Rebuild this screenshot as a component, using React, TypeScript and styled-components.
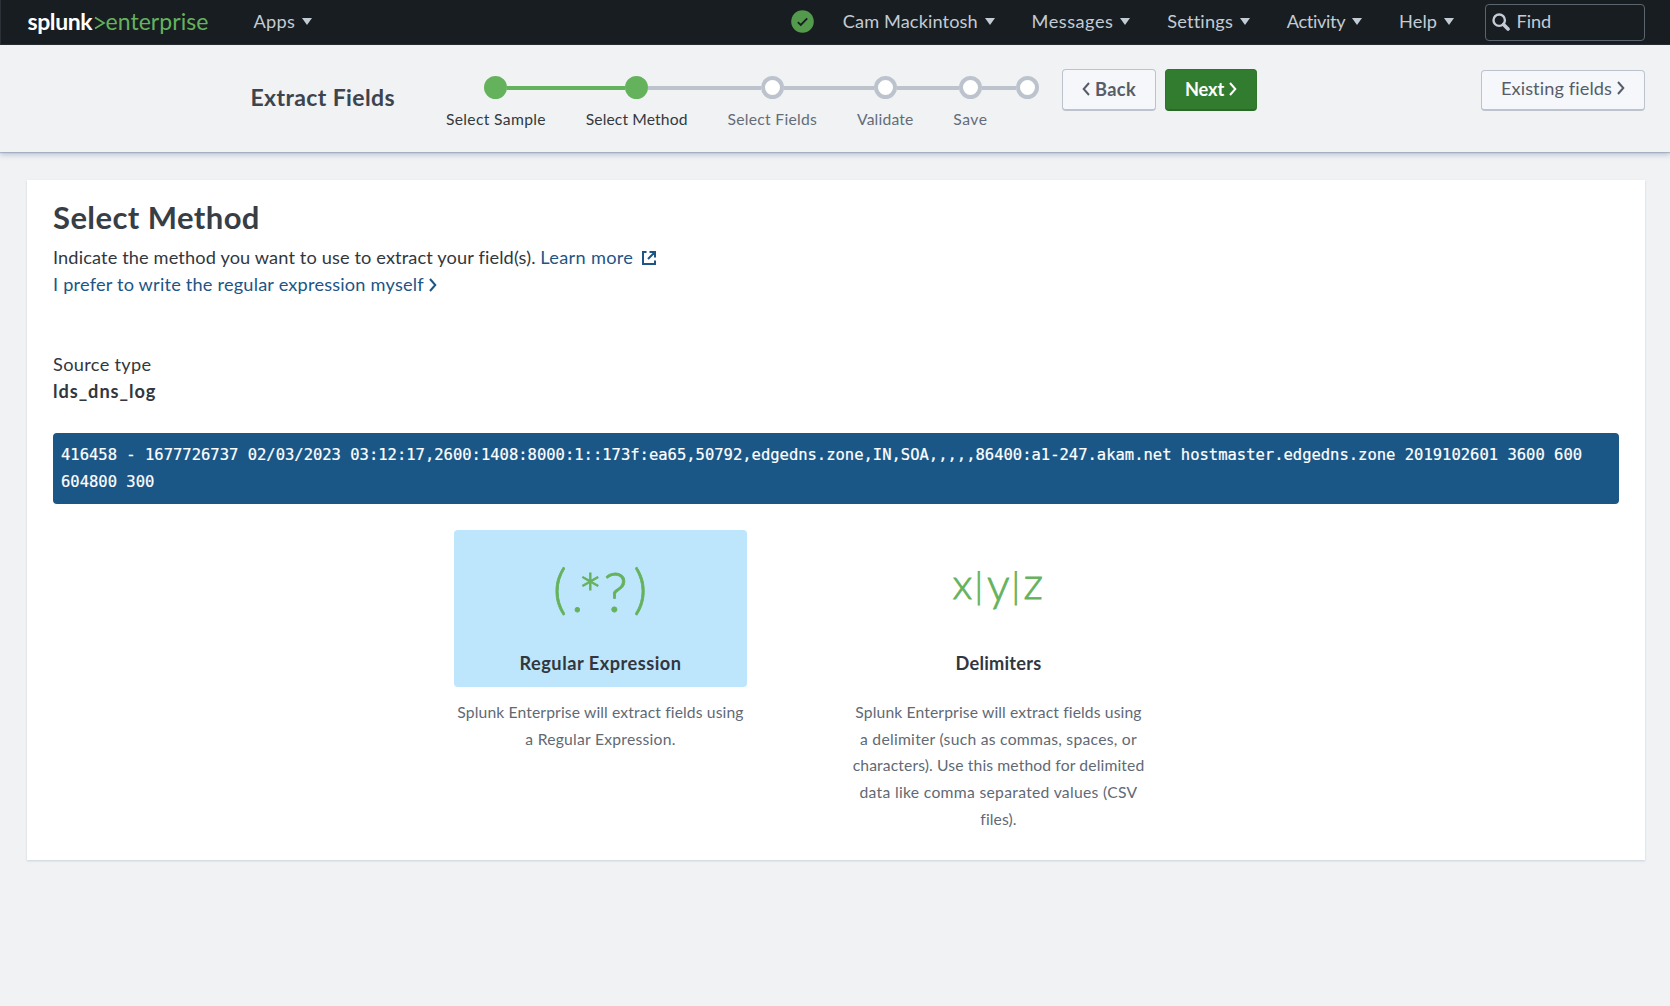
import React from 'react';
import styled, { createGlobalStyle, css } from 'styled-components';

const green = '#65b25d';
const grey = '#bcc3cd';
const ink = '#31373e';
const link = '#1d5586';

const GlobalStyle = createGlobalStyle`
  * { box-sizing: border-box; }
  body {
    margin: 0;
    background: #f0f2f4;
    color: ${ink};
    font-family: Lato, "Liberation Sans", sans-serif;
    font-size: 18.2px;
    line-height: 27px;
    font-variant-ligatures: none;
  }
`;

const Page = styled.div`
  height: 1006px;
  overflow: hidden;
`;

/* letter-spaced run of text */
const Label = styled.span<{ $track?: number }>`
  letter-spacing: ${(p) => p.$track ?? 0}px;
  white-space: nowrap;
`;

/* ---------- top bar ---------- */
const NavBar = styled.nav`
  display: flex;
  align-items: flex-start;
  height: 45px;
  padding: 0 25px 0 26.5px;
  background: #171d21;
  border-left: 1px solid #2b3136;
  border-bottom: 1px solid #24292c;
  color: #c3cbd4;
`;

const Logo = styled.a`
  display: flex;
  width: 226px;
  line-height: 42px;
  font-size: 23px;
  color: ${green};
`;

const LogoName = styled.span`
  width: 65px;
  font-weight: 700;
  letter-spacing: -0.4px;
  color: #fff;
`;

const LogoMark = styled.svg`
  width: 13px;
  height: 42px;
`;

const LogoEdition = styled.span`
  letter-spacing: 0.05px;
`;

const NavItem = styled.a`
  display: flex;
  align-items: center;
  gap: 7px;
  height: 43px;
`;

const MenuGroup = styled.div`
  display: flex;
  gap: 36.8px;
`;

const Caret = styled.span`
  width: 0;
  height: 0;
  border: 5px solid transparent;
  border-top: 7px solid currentColor;
  border-bottom: 0;
`;

const Status = styled.svg`
  width: 23px;
  height: 23px;
  margin: 10px 29px 0 auto;
`;

const FindBox = styled.div`
  display: flex;
  align-items: center;
  gap: 6.5px;
  width: 160px;
  height: 37px;
  margin: 4px 0 0 31px;
  padding: 0 0 2px 6px;
  border: 1px solid #5c656e;
  border-radius: 4px;
`;

/* ---------- wizard header ---------- */
const Header = styled.header`
  position: relative;
  display: flex;
  align-items: flex-start;
  height: 107px;
  padding: 0 25px 0 250.5px;
  background: #f0f2f4;
  box-shadow: 0 1px 1px rgba(120, 138, 165, 0.45), 0 3px 5px rgba(120, 138, 165, 0.4);
`;

const WizardTitle = styled.h2`
  width: 175.5px;
  margin: 39px 0 0;
  font-size: 23px;
  font-weight: 700;
  letter-spacing: 0.38px;
  color: #3c444d;
`;

const Steps = styled.ol`
  display: flex;
  width: 623px;
  margin: 31px 0 0;
  padding: 0;
  list-style: none;
`;

const Step = styled.li<{ $done: boolean }>`
  display: flex;
  flex: none;
  flex-direction: column;
  align-items: center;
  gap: 7px;
  font-size: 15.7px;
  color: ${(p) => (p.$done ? '#33393f' : '#646c78')};
`;

const Marker = styled.div`
  display: flex;
  align-items: center;
  align-self: stretch;
`;

const Rail = styled.span<{ $tone: string }>`
  flex: 1;
  height: 4px;
  background: ${(p) => p.$tone};
`;

const Dot = styled.span<{ $done: boolean }>`
  width: 23px;
  height: 23px;
  border: 4px solid ${(p) => (p.$done ? green : grey)};
  border-radius: 50%;
  background: ${(p) => (p.$done ? green : '#fff')};
`;

const StepName = styled.span<{ $track: number }>`
  min-height: 27px;
  padding: 0 19.9px;
  letter-spacing: ${(p) => p.$track}px;
  white-space: nowrap;
`;

const primary = css`
  border-color: #2f752c;
  border-bottom: 2px solid #2a6a28;
  background: #327c2f;
  color: #fff;
`;

const Button = styled.button<{ $width: number; $primary?: boolean; $bold?: boolean; $top?: number }>`
  display: flex;
  align-items: center;
  justify-content: center;
  gap: 5px;
  width: ${(p) => p.$width}px;
  height: ${(p) => 42 - (p.$top ?? 0)}px;
  margin-top: ${(p) => 24 + (p.$top ?? 0)}px;
  padding: 0 0 ${(p) => (p.$top ? 4 : 2)}px;
  border: 1px solid ${grey};
  border-bottom-width: 2px;
  border-radius: 4px;
  background: #f6f7fa;
  color: #565d69;
  font: ${(p) => (p.$bold ? 700 : 400)} 18.2px Lato, sans-serif;
  ${(p) => p.$primary && primary}
`;

const Actions = styled.div`
  display: flex;
  gap: 9px;
  margin-left: 13px;
`;

const Aside = styled.div`
  margin-left: auto;
`;

/* ---------- content ---------- */
const Card = styled.main`
  height: 680px;
  margin: 28px 25px 0 27px;
  padding: 21px 26px 0;
  background: #fff;
  box-shadow: 0 1px 2px rgba(60, 80, 100, 0.2);
`;

const Title = styled.h1`
  margin: 0 0 11px;
  font-size: 31px;
  font-weight: 700;
  line-height: 32px;
  letter-spacing: 0.42px;
  color: #373e46;
`;

const Line = styled.p<{ $bold?: boolean }>`
  display: flex;
  align-items: center;
  height: 27px;
  margin: 0;
  font-weight: ${(p) => (p.$bold ? 700 : 400)};
`;

const Link = styled.a<{ $gap: number }>`
  display: flex;
  align-items: center;
  gap: ${(p) => p.$gap}px;
  color: ${link};
`;

const Source = styled.section`
  margin: 53px 0 28px;
`;

const Event = styled.pre`
  height: 71px;
  margin: 0 0 26px;
  padding: 9px 8px;
  border-radius: 4px;
  background: #1a5787;
  color: #fff;
  font: 15.5px/27px "DejaVu Sans Mono", monospace;
  white-space: pre-wrap;
  -webkit-text-stroke: 0.2px #fff;
`;

const Methods = styled.div`
  display: flex;
  gap: 105px;
  margin-left: 401px;
`;

const Method = styled.section`
  width: 293px;
`;

const Tile = styled.div<{ $selected?: boolean }>`
  display: flex;
  flex-direction: column;
  align-items: center;
  justify-content: space-between;
  height: 157px;
  margin-bottom: 12px;
  padding: 27px 0 10px;
  border-radius: 4px;
  background: ${(p) => (p.$selected ? '#bde5fb' : 'transparent')};
  font-weight: 700;
  color: #31373e;
`;

const Glyph = styled.svg`
  width: 110px;
  height: 78px;
  overflow: visible;
  fill: ${green};
  stroke: ${green};
  stroke-width: 0.8;
  font-family: Lato, sans-serif;
  font-weight: 300;
`;

const Description = styled.p`
  margin: 0;
  font-size: 15.7px;
  line-height: 26.7px;
  text-align: center;
  white-space: nowrap;
  color: #616975;
`;

const Row = styled.span<{ $track: number }>`
  display: block;
  letter-spacing: ${(p) => p.$track}px;
`;

const Chevron = ({ left }: { left?: boolean }) => (
  <svg width="8" height="14" viewBox="0 0 8 14" fill="none" stroke="currentColor" strokeWidth="2">
    <path d={left ? 'M7 1 1.7 7 7 13' : 'M1 1 6.3 7 1 13'} />
  </svg>
);

const menus = [
  { name: 'Cam Mackintosh', track: 0.1 },
  { name: 'Messages', track: 0.5 },
  { name: 'Settings', track: 0.2 },
  { name: 'Activity', track: -0.35 },
  { name: 'Help', track: 0.05 },
];

const steps = [
  { name: 'Select Sample', track: 0.33, done: true },
  { name: 'Select Method', track: 0.11, done: true },
  { name: 'Select Fields', track: 0.29, done: false },
  { name: 'Validate', track: 0.18, done: false },
  { name: 'Save', track: 0.5, done: false },
  { name: '', track: 0, done: false },
];

const eventText =
  '416458 - 1677726737 02/03/2023 03:12:17,2600:1408:8000:1::173f:ea65,50792,edgedns.zone,IN,SOA,,,,,86400:a1-247.akam.net hostmaster.edgedns.zone 2019102601 3600 600 604800 300';

const railTone = (from: number) => {
  if (from < 0 || from >= steps.length - 1) return 'transparent';
  return steps[from + 1].done ? green : grey;
};

export default function App() {
  return (
    <Page>
      <GlobalStyle />
      <NavBar>
        <Logo>
          <LogoName>splunk</LogoName>
          <LogoMark viewBox="0 0 13 42" fill="none" stroke={green} strokeWidth="1.7">
            <path d="M2 17.5 11 23 2 28.5" />
          </LogoMark>
          <LogoEdition>enterprise</LogoEdition>
        </Logo>
        <NavItem>
          <Label $track={0.3}>Apps</Label>
          <Caret />
        </NavItem>
        <Status viewBox="0 0 23 23">
          <circle cx="11.5" cy="11.5" r="11.3" fill="#539a4c" />
          <path d="M6.8 12.2 9.8 15 16.2 8.4" fill="none" stroke="#171d21" strokeWidth="1.8" />
        </Status>
        <MenuGroup>
          {menus.map((m) => (
            <NavItem key={m.name}>
              <Label $track={m.track}>{m.name}</Label>
              <Caret />
            </NavItem>
          ))}
        </MenuGroup>
        <FindBox>
          <svg width="18" height="18" viewBox="0 0 18 18" fill="none" stroke="currentColor">
            <circle cx="7.2" cy="7.2" r="5.7" strokeWidth="2.4" />
            <path d="M11.5 11.5 16 16" strokeWidth="3.6" strokeLinecap="round" />
          </svg>
          <Label $track={-0.1}>Find</Label>
        </FindBox>
      </NavBar>

      <Header>
        <WizardTitle>Extract Fields</WizardTitle>
        <Steps>
          {steps.map((s, i) => (
            <Step key={i} $done={s.done}>
              <Marker>
                <Rail $tone={railTone(i - 1)} />
                <Dot $done={s.done} />
                <Rail $tone={railTone(i)} />
              </Marker>
              <StepName $track={s.track}>{s.name}</StepName>
            </Step>
          ))}
        </Steps>
        <Actions>
          <Button $width={94} $bold>
            <Chevron left />
            <Label $track={0.4}>Back</Label>
          </Button>
          <Button $width={92} $bold $primary>
            <Label $track={-0.1}>Next</Label>
            <Chevron />
          </Button>
        </Actions>
        <Aside>
          <Button $width={164} $top={1}>
            <Label $track={0.1}>Existing fields</Label>
            <Chevron />
          </Button>
        </Aside>
      </Header>

      <Card>
        <Title>Select Method</Title>
        <Line>
          <Label $track={0.13}>Indicate the method you want to use to extract your field(s).&nbsp;</Label>
          <Link $gap={9}>
            <Label $track={0.3}>Learn more</Label>
            <svg width="14" height="14" viewBox="0 0 14 14" fill="none" stroke="currentColor" strokeWidth="2">
              <path d="M4.5 1H1v12h12V9.5M7.5 1H13v5.5M12.5 1.5 6 8" />
            </svg>
          </Link>
        </Line>
        <Line>
          <Link $gap={5}>
            <Label $track={0.19}>I prefer to write the regular expression myself</Label>
            <Chevron />
          </Link>
        </Line>
        <Source>
          <Line>
            <Label $track={0.32}>Source type</Label>
          </Line>
          <Line $bold>
            <Label $track={0.95}>lds_dns_log</Label>
          </Line>
        </Source>
        <Event>{eventText}</Event>
        <Methods>
          <Method>
            <Tile $selected>
              <Glyph viewBox="0 0 110 78" aria-label="(.*?)">
                <text>
                  <tspan x="7" y="50.5" fontSize="53">(</tspan>
                  <tspan x="25.5" y="55" fontSize="50">.</tspan>
                  <tspan x="32" y="59" fontSize="58">*</tspan>
                  <tspan x="57.5" y="55" fontSize="56">?</tspan>
                  <tspan x="87.5" y="50.5" fontSize="53">)</tspan>
                </text>
              </Glyph>
              <Label $track={0.5}>Regular Expression</Label>
            </Tile>
            <Description>
              <Row $track={0.12}>Splunk Enterprise will extract fields using</Row>
              <Row $track={0.24}>a Regular Expression.</Row>
            </Description>
          </Method>
          <Method>
            <Tile>
              <Glyph viewBox="0 0 110 78" aria-label="x|y|z">
                <text fontSize="42">
                  <tspan x="8.5" y="42">x</tspan>
                  <tspan x="30.5" y="42" fontSize="36">|</tspan>
                  <tspan x="43" y="43.5" fontSize="45">y</tspan>
                  <tspan x="67.5" y="42" fontSize="36">|</tspan>
                  <tspan x="79.5" y="42" fontSize="44">z</tspan>
                </text>
              </Glyph>
              <Label $track={0.22}>Delimiters</Label>
            </Tile>
            <Description>
              <Row $track={0.12}>Splunk Enterprise will extract fields using</Row>
              <Row $track={0.26}>a delimiter (such as commas, spaces, or</Row>
              <Row $track={0.12}>characters). Use this method for delimited</Row>
              <Row $track={0.3}>data like comma separated values (CSV</Row>
              <Row $track={0.1}>files).</Row>
            </Description>
          </Method>
        </Methods>
      </Card>
    </Page>
  );
}
